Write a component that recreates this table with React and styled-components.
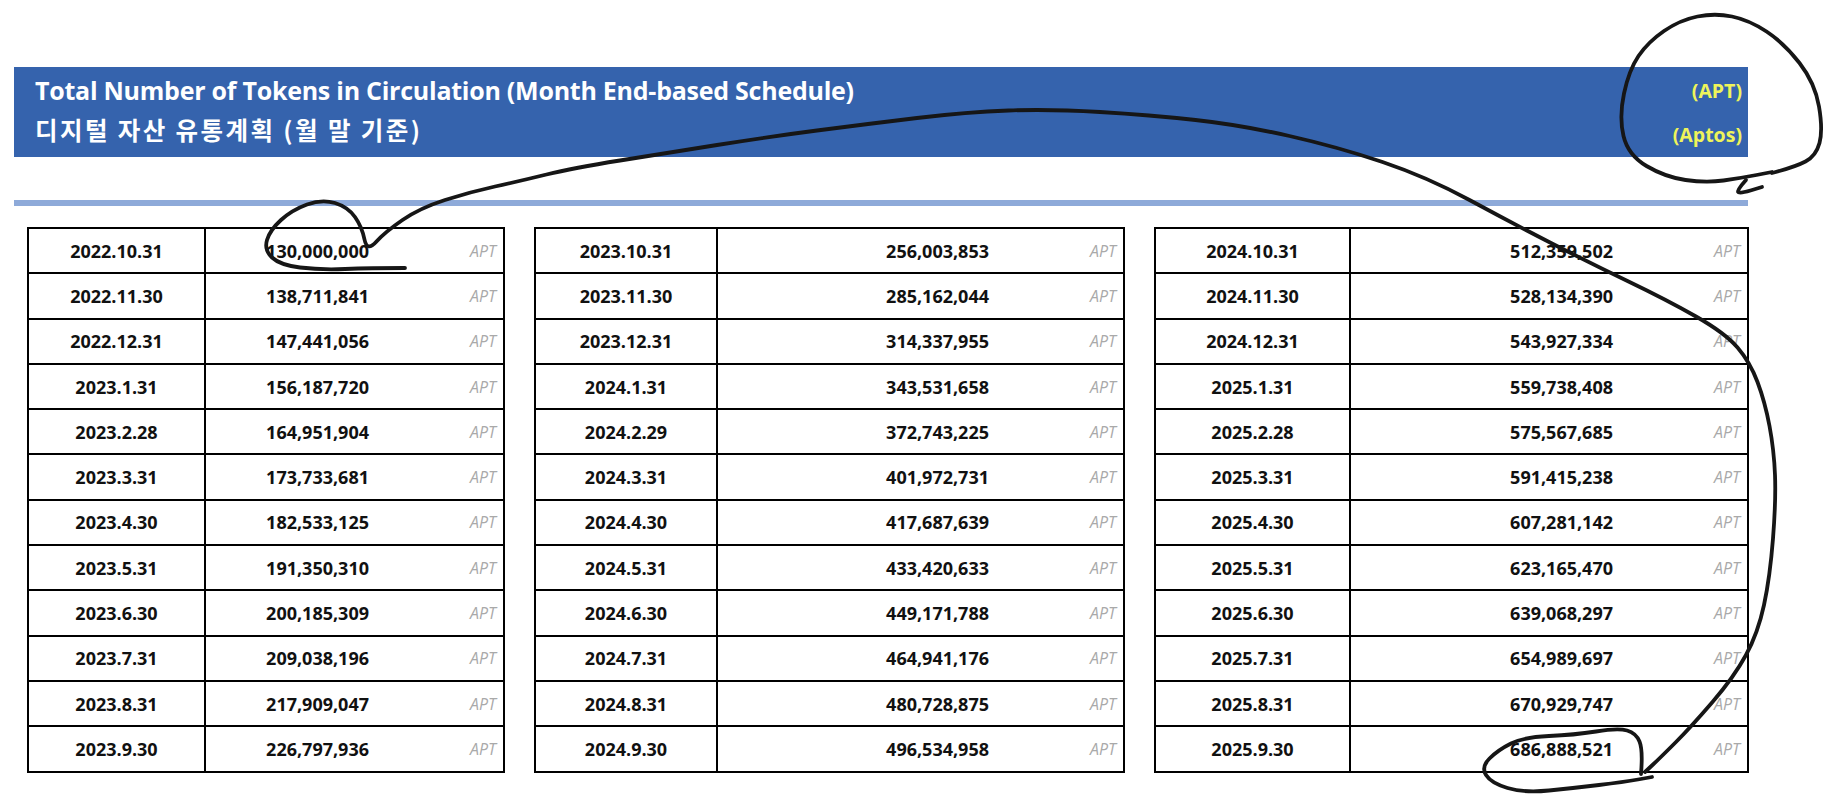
import React from "react";
import styled, { createGlobalStyle } from "styled-components";

const GlobalStyle = createGlobalStyle`
  html, body {
    margin: 0;
    padding: 0;
    background: #fff;
  }
  body {
    font-family: "Open Sans", "Noto Sans", "Noto Sans CJK KR", sans-serif;
  }
`;

const schedule = [
  {
    dateWidth: 175,
    width: 478,
    rows: [
      ["2022.10.31", "130,000,000"],
      ["2022.11.30", "138,711,841"],
      ["2022.12.31", "147,441,056"],
      ["2023.1.31", "156,187,720"],
      ["2023.2.28", "164,951,904"],
      ["2023.3.31", "173,733,681"],
      ["2023.4.30", "182,533,125"],
      ["2023.5.31", "191,350,310"],
      ["2023.6.30", "200,185,309"],
      ["2023.7.31", "209,038,196"],
      ["2023.8.31", "217,909,047"],
      ["2023.9.30", "226,797,936"],
    ],
  },
  {
    dateWidth: 180,
    width: 591,
    rows: [
      ["2023.10.31", "256,003,853"],
      ["2023.11.30", "285,162,044"],
      ["2023.12.31", "314,337,955"],
      ["2024.1.31", "343,531,658"],
      ["2024.2.29", "372,743,225"],
      ["2024.3.31", "401,972,731"],
      ["2024.4.30", "417,687,639"],
      ["2024.5.31", "433,420,633"],
      ["2024.6.30", "449,171,788"],
      ["2024.7.31", "464,941,176"],
      ["2024.8.31", "480,728,875"],
      ["2024.9.30", "496,534,958"],
    ],
  },
  {
    dateWidth: 193,
    width: 595,
    rows: [
      ["2024.10.31", "512,359,502"],
      ["2024.11.30", "528,134,390"],
      ["2024.12.31", "543,927,334"],
      ["2025.1.31", "559,738,408"],
      ["2025.2.28", "575,567,685"],
      ["2025.3.31", "591,415,238"],
      ["2025.4.30", "607,281,142"],
      ["2025.5.31", "623,165,470"],
      ["2025.6.30", "639,068,297"],
      ["2025.7.31", "654,989,697"],
      ["2025.8.31", "670,929,747"],
      ["2025.9.30", "686,888,521"],
    ],
  },
];

// pen marks drawn over the sheet
const strokes = [
  [
    [405, 268], [370, 268], [320, 270], [280, 265], [264, 250], [270, 230],
    [292, 210], [322, 199], [348, 207], [362, 227], [367, 252], [385, 232],
    [420, 208], [470, 192], [520, 181], [573, 168], [667, 153], [767, 137],
    [867, 124], [967, 112], [1050, 109], [1150, 115], [1241, 125], [1338, 147],
    [1427, 177], [1512, 223], [1590, 263], [1667, 300], [1725, 333], [1750, 362],
    [1765, 402], [1774, 450], [1776, 500], [1770, 577], [1758, 633], [1734, 677],
    [1691, 727], [1660, 758], [1645, 772],
  ],
  [
    [1641, 774], [1643, 750], [1636, 733], [1618, 728], [1574, 735], [1524, 737],
    [1498, 750], [1481, 767], [1491, 783], [1524, 793], [1574, 788], [1624, 782],
    [1652, 777],
  ],
  [
    [1772, 173], [1795, 167], [1816, 156], [1823, 130], [1815, 83], [1784, 43],
    [1749, 20], [1715, 13], [1680, 20], [1648, 42], [1629, 70], [1619, 117],
    [1628, 155], [1665, 177], [1706, 183], [1741, 178], [1772, 172],
  ],
  [[1746, 180], [1737, 190], [1739, 194], [1762, 187]],
];

const smooth = (pts) => {
  let d = `M ${pts[0][0]} ${pts[0][1]}`;
  for (let i = 1; i < pts.length - 1; i++) {
    const mx = (pts[i][0] + pts[i + 1][0]) / 2;
    const my = (pts[i][1] + pts[i + 1][1]) / 2;
    d += ` Q ${pts[i][0]} ${pts[i][1]} ${mx} ${my}`;
  }
  const last = pts[pts.length - 1];
  return d + ` L ${last[0]} ${last[1]}`;
};

const Page = styled.div`
  position: relative;
  width: 1841px;
  height: 803px;
  padding: 67px 0 0 14px;
  box-sizing: border-box;
  overflow: hidden;
`;

const Banner = styled.header`
  width: 1734px;
  height: 90px;
  box-sizing: border-box;
  background: #3563ad;
  display: flex;
  justify-content: space-between;
  padding: 3px 6px 0 21px;
`;

const TitleBlock = styled.div`
  color: #fff;
  font-weight: 700;
  line-height: 40px;
`;

const Title = styled.div`
  font-family: "Open Sans", "Noto Sans", sans-serif;
  font-size: 25px;
  letter-spacing: -0.25px;
`;

const KoreanTitle = styled.div`
  font-family: "Noto Sans CJK KR", "Noto Sans", sans-serif;
  font-size: 24.5px;
  letter-spacing: 2.4px;
`;

const TokenBlock = styled.div`
  color: #eef45a;
  font-family: "Open Sans", "Noto Sans", sans-serif;
  font-weight: 700;
  font-size: 19.5px;
  line-height: 44px;
  text-align: right;
  margin-top: -1px;
`;

const Rule = styled.div`
  width: 1734px;
  height: 6px;
  margin-top: 43px;
  background: #8eaad9;
`;

const Tables = styled.div`
  display: flex;
  gap: 29px;
  margin: 21px 0 0 13px;
`;

const Sheet = styled.div`
  width: ${(p) => p.$width}px;
  box-sizing: border-box;
  background: #000;
  padding: 2px;
  display: grid;
  grid-template-columns: ${(p) => p.$dateWidth}px 1fr;
  grid-auto-rows: 43.3px;
  gap: 2px;
`;

const Cell = styled.div`
  background: #fff;
  display: flex;
  align-items: center;
  font-family: "Open Sans", "Noto Sans", sans-serif;
  font-weight: 700;
  font-size: 18px;
  color: #111;
`;

const DateCell = styled(Cell)`
  justify-content: center;
`;

const AmountCell = styled(Cell)`
  display: grid;
  grid-template-columns: 1fr 134px;
  align-items: center;
`;

const Amount = styled.span`
  text-align: right;
`;

const Unit = styled.span`
  text-align: right;
  padding-right: 7px;
  font-weight: 400;
  font-style: italic;
  font-size: 16px;
  color: #a9a9a9;
`;

const Ink = styled.svg`
  position: absolute;
  left: 0;
  top: 0;
  pointer-events: none;
`;

export default function App() {
  return (
    <Page>
      <GlobalStyle />
      <Banner>
        <TitleBlock>
          <Title>Total Number of Tokens in Circulation (Month End-based Schedule)</Title>
          <KoreanTitle>디지털 자산 유통계획 (월 말 기준)</KoreanTitle>
        </TitleBlock>
        <TokenBlock>
          <div>(APT)</div>
          <div>(Aptos)</div>
        </TokenBlock>
      </Banner>
      <Rule />
      <Tables>
        {schedule.map((sheet, i) => (
          <Sheet key={i} $width={sheet.width} $dateWidth={sheet.dateWidth}>
            {sheet.rows.map(([date, amount]) => (
              <React.Fragment key={date}>
                <DateCell>{date}</DateCell>
                <AmountCell>
                  <Amount>{amount}</Amount>
                  <Unit>APT</Unit>
                </AmountCell>
              </React.Fragment>
            ))}
          </Sheet>
        ))}
      </Tables>
      <Ink width="1841" height="803" viewBox="0 0 1841 803">
        {strokes.map((pts, i) => (
          <path
            key={i}
            d={smooth(pts)}
            fill="none"
            stroke="#161616"
            strokeWidth="3.8"
            strokeLinecap="round"
            strokeLinejoin="round"
          />
        ))}
      </Ink>
    </Page>
  );
}
